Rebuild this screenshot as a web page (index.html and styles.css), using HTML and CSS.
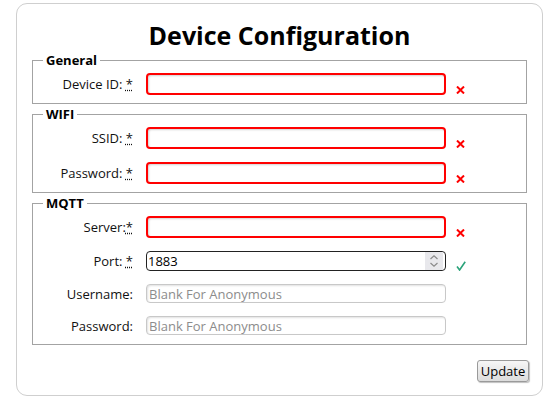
FILE: index.html
```html
<!DOCTYPE html>
<html>
<head>
<meta charset="utf-8">
<link rel="stylesheet" href="styles.css">
</head>
<body>
<div class="panel">
  <h1 class="title">Device Configuration</h1>
  <fieldset class="group">
    <legend class="legend">General</legend>
    <div class="rows">
      <label class="lbl">Device ID: <abbr title="required">*</abbr></label>
      <input class="field invalid" type="text">
      <span class="mark"><svg width="9" height="8" viewBox="0 0 9 8"><path d="M1 0.5 L8 7.5 M8 0.5 L1 7.5" stroke="#f00" stroke-width="2"/></svg></span>
    </div>
  </fieldset>
  <fieldset class="group">
    <legend class="legend">WIFI</legend>
    <div class="rows">
      <label class="lbl">SSID: <abbr title="required">*</abbr></label>
      <input class="field invalid" type="text">
      <span class="mark"><svg width="9" height="8" viewBox="0 0 9 8"><path d="M1 0.5 L8 7.5 M8 0.5 L1 7.5" stroke="#f00" stroke-width="2"/></svg></span>
      <label class="lbl">Password: <abbr title="required">*</abbr></label>
      <input class="field invalid" type="password">
      <span class="mark"><svg width="9" height="8" viewBox="0 0 9 8"><path d="M1 0.5 L8 7.5 M8 0.5 L1 7.5" stroke="#f00" stroke-width="2"/></svg></span>
    </div>
  </fieldset>
  <fieldset class="group group-last">
    <legend class="legend">MQTT</legend>
    <div class="rows">
      <label class="lbl">Server:<abbr title="required">*</abbr></label>
      <input class="field invalid" type="text">
      <span class="mark"><svg width="9" height="8" viewBox="0 0 9 8"><path d="M1 0.5 L8 7.5 M8 0.5 L1 7.5" stroke="#f00" stroke-width="2"/></svg></span>
      <label class="lbl">Port: <abbr title="required">*</abbr></label>
      <div class="num-wrap">
        <input class="field port" type="text" value="1883">
        <span class="spin"><svg width="18" height="18" viewBox="0 0 18 18"><path d="M5.5 7 L9 3.8 L12.5 7 M5.5 11 L9 14.2 L12.5 11" fill="none" stroke="#8a8a8a" stroke-width="1.2"/></svg></span>
      </div>
      <span class="mark ok"><svg width="10" height="10" viewBox="0 0 10 10"><path d="M1 5.5 L3.6 9 L9.2 0.8" fill="none" stroke="#2aa37a" stroke-width="1.6"/></svg></span>
      <label class="lbl">Username:</label>
      <input class="field optional" type="text" placeholder="Blank For Anonymous">
      <span></span>
      <label class="lbl">Password:</label>
      <input class="field optional" type="password" placeholder="Blank For Anonymous">
      <span></span>
    </div>
  </fieldset>
  <div class="actions">
    <button class="btn" type="button">Update</button>
  </div>
</div>
</body>
</html>
```
FILE: styles.css
```css
html, body {
  margin: 0;
  padding: 0;
  background: #fff;
}
body {
  font-family: "Open Sans", "Noto Sans", sans-serif;
  font-size: 13px;
  color: #111;
}
.panel {
  box-sizing: border-box;
  margin: 3px 0 0 16px;
  width: 527px;
  height: 393px;
  border: 1px solid #cfcfcf;
  border-radius: 11px;
  padding: 0 15px 0 15px;
}
.title {
  margin: 16px 0 0;
  font-size: 25px;
  line-height: 30px;
  font-weight: 700;
  text-align: center;
  color: #000;
}
.group {
  margin: 1px 0 0;
  padding: 4px 10px 8px 10px;
  border: 1px solid #a3a3a3;
  min-width: 0;
}
.group-last {
  padding-bottom: 9px;
}
.legend {
  padding: 0 3px;
  font-weight: 700;
  font-size: 13px;
  line-height: 18px;
  color: #000;
}
.rows {
  display: grid;
  grid-template-columns: 90px 300px 20px;
  column-gap: 13px;
  row-gap: 13px;
  align-items: center;
}
.lbl {
  text-align: right;
  white-space: nowrap;
  line-height: 18px;
}
.lbl abbr {
  text-decoration: underline dotted;
}
.field {
  box-sizing: border-box;
  width: 300px;
  margin: 0;
  font-family: inherit;
  font-size: 13px;
  color: #000;
  outline: none;
  background: #fff;
}
.invalid {
  height: 22px;
  border: 2px solid #f00;
  border-radius: 4px;
  box-shadow: inset 1px 1px 2px rgba(0,0,0,0.18);
  padding: 0 2px;
}
.port {
  height: 20px;
  border: 1px solid #222;
  border-radius: 4px;
  padding: 0 1px;
}
.optional {
  height: 19px;
  border: 1px solid #c8c8c8;
  border-radius: 4px;
  box-shadow: inset 1px 1px 2px rgba(0,0,0,0.12);
  padding: 0 2px;
}
.optional::placeholder {
  color: #8c8c8c;
}
.num-wrap {
  position: relative;
  width: 300px;
  height: 20px;
}
.spin {
  position: absolute;
  right: 3px;
  top: 1px;
  width: 18px;
  height: 18px;
  background: #e8e8ec;
  display: flex;
}
.mark {
  align-self: end;
  margin: 0 0 1px -3px;
  line-height: 0;
}
.mark.ok {
  margin-bottom: 0;
}
.actions {
  display: flex;
  justify-content: flex-end;
  margin: 15px -2px 0 0;
}
.btn {
  box-sizing: border-box;
  width: 52px;
  height: 22px;
  padding: 0;
  font-family: inherit;
  font-size: 13px;
  color: #000;
  border: 1px solid #9a9a9a;
  border-radius: 3px;
  background: linear-gradient(#f6f6f6, #dcdcdc);
  box-shadow: 1px 1px 1px rgba(0,0,0,0.25);
}
```
